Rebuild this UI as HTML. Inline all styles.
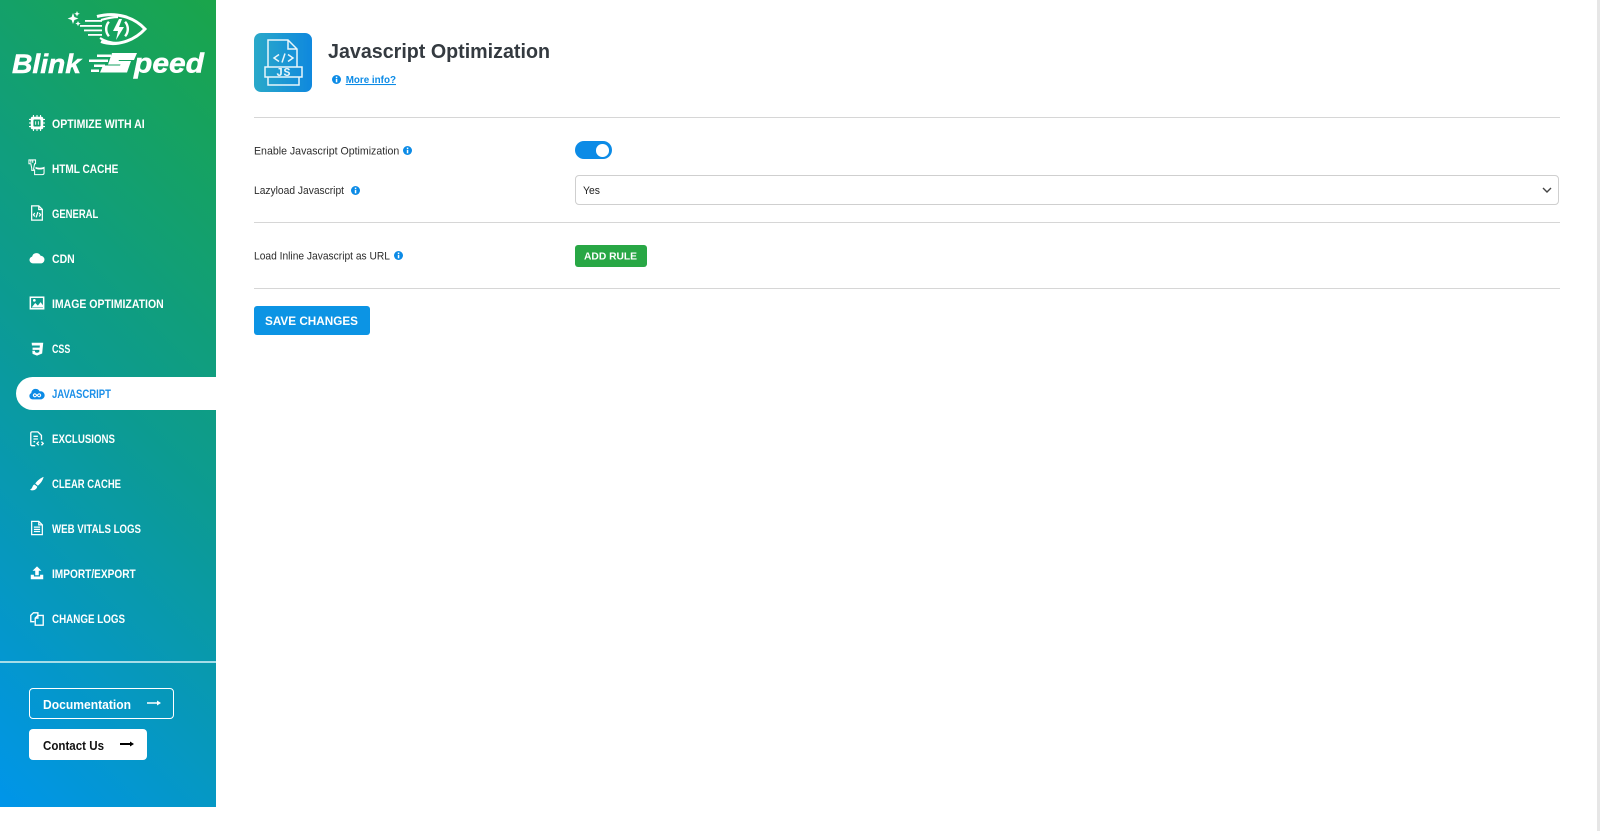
<!DOCTYPE html>
<html><head><meta charset="utf-8"><style>
*{box-sizing:border-box}
html,body{margin:0;padding:0;width:1600px;height:831px;overflow:hidden;background:#fff;font-family:"Liberation Sans",sans-serif}
.abs{position:absolute}
#side{position:absolute;left:0;top:0;width:216px;height:807px;background:linear-gradient(45deg,#0095ea 0%,#0c9b92 50%,#1aa54a 100%)}
.ic{position:absolute;left:29px;width:16px;height:16px}
.hr{position:absolute;left:254px;width:1306px;height:1px;background:#d6d6d6}
#t{position:absolute;left:0;top:0;z-index:5}
#t text{font-family:"Liberation Sans",sans-serif}
.m{font-size:11.5px;font-weight:bold;fill:#fff}
.l{font-size:11px;fill:#2c2c2c}
</style></head><body>
<div id="side">
<svg class="abs" style="left:0;top:0" width="216" height="90" viewBox="0 0 216 90">
<g fill="#fff"><path d="M73 13l1.400 4 4 1.500-4 1.500-1.400 4-1.400-4-4-1.500 4-1.500zM77 11l.8 2 2 .8-2 .8-.8 2-.8-2-2-.8 2-.8zM78 21l.8 1.800 1.800.8-1.800.8-.8 1.800-.8-1.800-1.800-.8 1.800-.8z"/>
<path d="M97 16.500C116 11.500 134 17 145 29 134 41 116 47 101 41.500" fill="none" stroke="#fff" stroke-width="3"/>
<path d="M101 20C108 18 112 17 118 17M100 38C106 42 112 43 118 43" fill="none" stroke="#fff" stroke-width="2.200"/>
<path d="M119 19l-6 12h5l-2 9 8-13h-5l3-8z"/><path d="M108 21a12 12 0 0 0 0 16l1.800-1.500a10 10 0 0 1 0-13zM126 21a12 12 0 0 1 0 16l-1.800-1.500a10 10 0 0 0 0-13z"/>
<rect x="85" y="20" width="17" height="1.800"/><rect x="80" y="25" width="22" height="1.800"/><rect x="84" y="29.500" width="18" height="1.800"/><rect x="88" y="34" width="14" height="1.800"/></g>
<g fill="#fff"><rect x="97" y="54.500" width="14" height="2.500"/><rect x="89" y="59.500" width="19" height="2.500"/><rect x="94" y="64.500" width="11" height="2.500"/><rect x="91" y="69.500" width="8" height="2.500"/>
<path d="M112 53H137L134 60H119L118.500 61H131L127 72.500H100L103 65.500H120L120.500 64.500H108Z"/></g>
</svg>

<svg class="ic" style="top:115px" viewBox="0 0 18 18"><path fill="#fff" d="M4 2h10a2 2 0 0 1 2 2v10a2 2 0 0 1-2 2H4a2 2 0 0 1-2-2V4a2 2 0 0 1 2-2z"/><path stroke="#fff" stroke-width="1.200" d="M5 0v18M9 0v18M13 0v18M0 5h18M0 9h18M0 13h18"/><rect x="5" y="5" width="8" height="8" rx="1" fill="#119c70"/><path stroke="#fff" d="M7.500 7v4M10.500 7v4"/></svg>
<svg class="ic" style="top:159px;left:28px;width:17px;height:17px" viewBox="0 0 18 18" fill="none" stroke="#fff" stroke-width="1.100"><path d="M1 1h7v4H7l-1 5v2H4v-2L3 5H1z"/><path d="M3 1v3M5 1v3"/><path d="M8 9c2 1 7 1 9 0v6c0 1-1 1.500-2 1.500H7V11"/><path d="M8 9.500c2 1.500 7 1.500 9 0"/></svg>
<svg class="ic" style="top:205px" viewBox="0 0 18 18" fill="none" stroke="#fff" stroke-width="1.400"><path d="M3 1h8l4 4v12H3z"/><path d="M11 1v4h4M6.500 9L5 11l1.500 2M11.500 9l1.500 2-1.500 2M10 8l-2 6"/></svg>
<svg class="ic" style="top:250px" viewBox="0 0 18 18"><path fill="#fff" d="M4.500 15A3.800 3.800 0 0 1 3.500 7.500 5 5 0 0 1 13 6.500a4.300 4.300 0 0 1 1 8.500z"/></svg>
<svg class="ic" style="top:295px" viewBox="0 0 18 18"><rect x="1.500" y="2.500" width="15" height="13" fill="none" stroke="#fff" stroke-width="1.700"/><path fill="#fff" d="M3 14l4-5 3 3 3-4 3 4v2z"/><circle cx="6" cy="6" r="1.500" fill="#fff"/></svg>
<svg class="ic" style="top:341px" viewBox="0 0 18 18"><path fill="#fff" d="M3 2h13l-1.200 12L9 16.500 4 14.500 3.700 11h3l.1 1.500 2.200.8 2.500-.8.200-2.500H4V7.500h8l.2-2.500H3.300z"/></svg>

<div class="abs" style="left:16px;top:377px;width:200px;height:33px;background:#fff;border-radius:17px 0 0 17px"></div>
<svg class="ic" style="top:386px" viewBox="0 0 18 18"><path fill="#0c8be6" d="M4 15A3.700 3.700 0 0 1 2.500 8 5 5 0 0 1 12 6a4.600 4.600 0 0 1 2 9z"/><path fill="none" stroke="#fff" stroke-width="1.200" d="M7.500 9.200a1.600 1.600 0 1 0 0 2.600l3-2.600a1.600 1.600 0 1 1 0 2.600z"/></svg>

<svg class="ic" style="top:431px" viewBox="0 0 18 18" fill="none" stroke="#fff" stroke-width="1.500"><path d="M7 16.500H3.500a1.500 1.500 0 0 1-1.500-1.500V2.500A1.500 1.500 0 0 1 3.500 1H10l4 4v5"/><path d="M5 6h5M5 9h5M5 12h2M11 12l-2 2 2 2M14 12l2 2-2 2"/></svg>
<svg class="ic" style="top:476px" viewBox="0 0 18 18"><path fill="#fff" d="M16.500 1c-3 1-7 4-9.500 7.500l3 2.500C13 8.500 15.500 5 16.500 1zM6.200 9.500C3.500 10 4.500 14 1 15.500c3 1.500 7.500.5 8.300-3.500z"/></svg>
<svg class="ic" style="top:520px" viewBox="0 0 18 18" fill="none" stroke="#fff" stroke-width="1.400"><path d="M3 1.500h8l4 4v11H3zM11 1.500v4h4M5.500 8h7M5.500 10.500h7M5.500 13h7"/></svg>
<svg class="ic" style="top:565px" viewBox="0 0 18 18"><path fill="#fff" d="M9 1.500l5 5h-3v5H7v-5H4zM2 11h3.500v2h7v-2H16v5H2z"/></svg>
<svg class="ic" style="top:611px" viewBox="0 0 18 18" fill="none" stroke="#fff" stroke-width="1.500"><path d="M6 12H2V5l3-3h5v3"/><path d="M7 8l3-3h6v11H7z"/><path d="M7 8h3V5"/></svg>

<div class="abs" style="left:0;top:661px;width:216px;height:2px;background:#a6dde8"></div>
<div class="abs" style="left:29px;top:688px;width:145px;height:31px;border:1px solid #fff;border-radius:4px"></div>
<svg class="abs" style="left:147px;top:697px" width="14" height="12" viewBox="0 0 14 12"><path d="M0 6h12" stroke="#fff" stroke-width="1.500"/><path d="M10 3.500L14 6l-4 2.500z" fill="#fff"/></svg>
<div class="abs" style="left:29px;top:729px;width:118px;height:31px;background:#fff;border-radius:4px"></div>
<svg class="abs" style="left:120px;top:738px" width="14" height="12" viewBox="0 0 14 12"><path d="M0 6h12" stroke="#000" stroke-width="2"/><path d="M10 3.500L14 6l-4 2.500z" fill="#000"/></svg>
</div>

<svg class="abs" style="left:254px;top:33px" width="58" height="59" viewBox="0 0 58 59"><defs><linearGradient id="g" x1="0" y1="0" x2="1" y2="0"><stop offset="0" stop-color="#2aa9c9"/><stop offset="1" stop-color="#0f88de"/></linearGradient></defs><rect width="58" height="59" rx="7" fill="url(#g)"/>
<g fill="none" stroke="#e8f6fb" stroke-width="1.500"><path d="M14 34V7h20l9 9v18M34 7v9h9"/><rect x="11" y="34" width="37" height="10"/><path d="M14 44v8h31v-8"/><path d="M25 21.500l-5 3.500 5 3.500M34 21.500l5 3.500-5 3.500M31 20.500l-3 9"/></g>
</svg>
<svg class="abs" style="left:332px;top:75px" width="9" height="9" viewBox="0 0 9 9"><circle cx="4.500" cy="4.500" r="4.500" fill="#0c8be6"/><rect x="3.800" y="3.800" width="1.500" height="3.500" fill="#fff"/><rect x="3.800" y="1.600" width="1.500" height="1.400" fill="#fff"/></svg>
<div class="hr" style="top:117px"></div>

<svg class="abs" style="left:403px;top:146px" width="9" height="9" viewBox="0 0 9 9"><circle cx="4.500" cy="4.500" r="4.500" fill="#0c8be6"/><rect x="3.800" y="3.800" width="1.500" height="3.500" fill="#fff"/><rect x="3.800" y="1.600" width="1.500" height="1.400" fill="#fff"/></svg>
<div class="abs" style="left:574.500px;top:141px;width:37px;height:18px;border-radius:9px;background:#0c8be6"></div>
<div class="abs" style="left:596px;top:144px;width:12.500px;height:12.500px;border-radius:50%;background:#fff"></div>

<svg class="abs" style="left:351px;top:186px" width="9" height="9" viewBox="0 0 9 9"><circle cx="4.500" cy="4.500" r="4.500" fill="#0c8be6"/><rect x="3.800" y="3.800" width="1.500" height="3.500" fill="#fff"/><rect x="3.800" y="1.600" width="1.500" height="1.400" fill="#fff"/></svg>
<div class="abs" style="left:575px;top:175px;width:984px;height:30px;border:1px solid #cfcfcf;border-radius:4px;background:#fff"></div>
<svg class="abs" style="left:1542px;top:187px" width="10" height="7" viewBox="0 0 10 7"><path d="M1 1l4 4 4-4" fill="none" stroke="#444" stroke-width="1.400"/></svg>
<div class="hr" style="top:222px"></div>

<svg class="abs" style="left:394px;top:251px" width="9" height="9" viewBox="0 0 9 9"><circle cx="4.500" cy="4.500" r="4.500" fill="#0c8be6"/><rect x="3.800" y="3.800" width="1.500" height="3.500" fill="#fff"/><rect x="3.800" y="1.600" width="1.500" height="1.400" fill="#fff"/></svg>
<div class="abs" style="left:574.500px;top:245px;width:72.500px;height:22px;border-radius:3px;background:#28a745"></div>
<div class="hr" style="top:288px"></div>
<div class="abs" style="left:254px;top:306px;width:116px;height:29px;border-radius:3px;background:#0c94e4"></div>

<div class="abs" style="left:1597px;top:0;width:3px;height:831px;background:#e6e6e6"></div>

<svg id="t" width="1600" height="831" viewBox="0 0 1600 831">
<g fill="#fff" stroke="#fff" stroke-width=".5">
<text x="12" y="73" style="font-size:27px;font-weight:bold;font-style:italic" textLength="69" lengthAdjust="spacingAndGlyphs">Blink</text>
<text x="134" y="72.500" style="font-size:28px;font-weight:bold;font-style:italic" textLength="70" lengthAdjust="spacingAndGlyphs">peed</text>
</g>
<text class="m" x="52" y="128" textLength="92.700" lengthAdjust="spacingAndGlyphs">OPTIMIZE WITH AI</text>
<text class="m" x="52" y="173" textLength="66.300" lengthAdjust="spacingAndGlyphs">HTML CACHE</text>
<text class="m" x="52" y="218" textLength="46.300" lengthAdjust="spacingAndGlyphs">GENERAL</text>
<text class="m" x="52" y="263" textLength="22.700" lengthAdjust="spacingAndGlyphs">CDN</text>
<text class="m" x="52" y="308" textLength="111.700" lengthAdjust="spacingAndGlyphs">IMAGE OPTIMIZATION</text>
<text class="m" x="52" y="353" textLength="18.300" lengthAdjust="spacingAndGlyphs">CSS</text>
<text class="m" x="52" y="398" textLength="59" lengthAdjust="spacingAndGlyphs" style="fill:#1b8fe8">JAVASCRIPT</text>
<text class="m" x="52" y="443" textLength="63" lengthAdjust="spacingAndGlyphs">EXCLUSIONS</text>
<text class="m" x="52" y="488" textLength="69" lengthAdjust="spacingAndGlyphs">CLEAR CACHE</text>
<text class="m" x="52" y="533" textLength="89" lengthAdjust="spacingAndGlyphs">WEB VITALS LOGS</text>
<text class="m" x="52" y="578" textLength="83.700" lengthAdjust="spacingAndGlyphs">IMPORT/EXPORT</text>
<text class="m" x="52" y="623" textLength="73" lengthAdjust="spacingAndGlyphs">CHANGE LOGS</text>
<text x="43" y="709" style="font-size:13px;font-weight:bold;fill:#fff" textLength="88" lengthAdjust="spacingAndGlyphs">Documentation</text>
<text x="43" y="750" style="font-size:13px;font-weight:bold;fill:#111" textLength="61" lengthAdjust="spacingAndGlyphs">Contact Us</text>
<text x="328" y="58" style="font-size:20px;font-weight:bold;fill:#343a40" textLength="222" lengthAdjust="spacingAndGlyphs">Javascript Optimization</text>
<text x="345.700" y="83" style="font-size:10.500px;font-weight:bold;fill:#0c8be6;text-decoration:underline" textLength="50.300" lengthAdjust="spacingAndGlyphs">More info?</text>
<text x="283.500" y="76" text-anchor="middle" style="font-family:'Liberation Mono',monospace;font-size:11.500px;font-weight:bold;fill:#e8f6fb" letter-spacing=".5">JS</text>
<text class="l" x="254" y="154.500" textLength="145.300" lengthAdjust="spacingAndGlyphs">Enable Javascript Optimization</text>
<text class="l" x="254" y="194" textLength="90" lengthAdjust="spacingAndGlyphs">Lazyload Javascript</text>
<text class="l" x="254" y="259.500" textLength="136" lengthAdjust="spacingAndGlyphs">Load Inline Javascript as URL</text>
<text x="583" y="194" style="font-size:11px;fill:#222" textLength="17" lengthAdjust="spacingAndGlyphs">Yes</text>
<text x="584" y="259.500" style="font-size:10px;font-weight:bold;fill:#fff" textLength="53" lengthAdjust="spacingAndGlyphs">ADD RULE</text>
<text x="265" y="325" style="font-size:11.500px;font-weight:bold;fill:#fff" textLength="93" lengthAdjust="spacingAndGlyphs">SAVE CHANGES</text>
</svg>
</body></html>
